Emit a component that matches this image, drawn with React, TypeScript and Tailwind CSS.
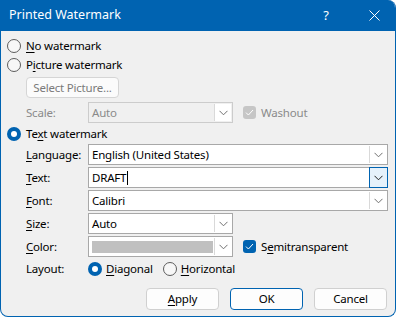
import React from "react";

const font = { fontFamily: '"Segoe UI", "Noto Sans", sans-serif' };

const U = ({ children }: { children: React.ReactNode }) => (
  <span className="underline underline-offset-2 decoration-1">{children}</span>
);

const Chevron = ({ color = "#606060" }: { color?: string }) => (
  <svg width="9" height="6" viewBox="0 0 9 6">
    <path d="M0.5 0.8 L4.5 4.8 L8.5 0.8" fill="none" stroke={color} strokeWidth="1" />
  </svg>
);

const Radio = ({ checked = false }: { checked?: boolean }) =>
  checked ? (
    <span className="w-[14px] h-[14px] rounded-full bg-[#0063b1] flex items-center justify-center shrink-0">
      <span className="w-[6px] h-[6px] rounded-full bg-white" />
    </span>
  ) : (
    <span className="w-[14px] h-[14px] rounded-full border border-[#5c5c5c] bg-[#f7f7f7] shrink-0" />
  );

const Check = ({ disabled = false }: { disabled?: boolean }) => (
  <span
    className={`w-[13px] h-[13px] rounded-[3px] flex items-center justify-center shrink-0 ${
      disabled ? "bg-[#c6c6c6]" : "bg-[#0063b1]"
    }`}
  >
    <svg width="9" height="7" viewBox="0 0 9 7">
      <path d="M1 3.6 L3.4 6 L8 1" fill="none" stroke="white" strokeWidth="1" />
    </svg>
  </span>
);

const Combo = ({
  width,
  text,
  disabled = false,
  focused = false,
  children,
}: {
  width: string;
  text?: string;
  disabled?: boolean;
  focused?: boolean;
  children?: React.ReactNode;
}) => (
  <div
    className={`${width} h-[21px] flex border ${
      disabled ? "border-[#cccccc] bg-[#f0f0f0] text-[#8a8a8a]" : "border-[#a8a8a8] bg-white text-black"
    }`}
  >
    <div className="flex-1 flex items-center pl-[3px] leading-none">{children ?? text}</div>
    <div
      className={`w-[17px] flex items-center justify-center ${
        focused
          ? "border border-[#0063b1] bg-[#e5f1fb] -my-px -mr-px w-[19px]"
          : "border-l border-[#d9d9d9] bg-white m-px"
      }`}
    >
      <Chevron color={focused ? "#1e1e1e" : "#707070"} />
    </div>
  </div>
);

const Label = ({ children, muted = false }: { children: React.ReactNode; muted?: boolean }) => (
  <div className={`w-[62px] ${muted ? "text-[#8a8a8a]" : "text-black"}`}>{children}</div>
);

const Button = ({ children, primary = false }: { children: React.ReactNode; primary?: boolean }) => (
  <button
    className={`w-[73px] h-[22px] rounded-[4px] bg-[#fdfdfd] text-black flex items-center justify-center border ${
      primary ? "border-[#0063b1]" : "border-[#d0d0d0]"
    }`}
  >
    {children}
  </button>
);

export default function App() {
  return (
    <div className="w-[396px] h-[317px] bg-white text-[11.5px] tracking-[-0.2px] text-black" style={font}>
      <div className="w-full h-full flex flex-col rounded-b-[8px] rounded-tr-[8px] overflow-hidden border border-t-0 border-[#0063b1] bg-[#f0f0f0]">
        <div className="h-[31px] bg-[#0063b1] text-white flex items-center shrink-0 -mx-px tracking-normal">
          <div className="pl-[9px] flex-1 text-[12.5px]">Printed Watermark</div>
          <div className="w-[20px] text-center text-[13px] mr-[33px]">?</div>
          <svg width="11" height="11" viewBox="0 0 11 11" className="mr-[16px]">
            <path d="M0.5 0.5 L10.5 10.5 M10.5 0.5 L0.5 10.5" stroke="white" strokeWidth="1" />
          </svg>
        </div>

        <div className="flex flex-col pl-[6px] pt-[5px]">
          <div className="h-[19px] flex items-center gap-[5px]">
            <Radio />
            <span><U>N</U>o watermark</span>
          </div>
          <div className="h-[19px] flex items-center gap-[5px]">
            <Radio />
            <span>P<U>i</U>cture watermark</span>
          </div>
          <div className="pl-[19px] mt-[3px]">
            <div className="w-[93px] h-[21px] rounded-[4px] border border-[#d5d5d5] bg-[#fbfbfb] text-[#7a7a7a] flex items-center justify-center">
              Select Picture...
            </div>
          </div>
          <div className="pl-[19px] mt-[4px] h-[21px] flex items-center">
            <Label muted>Scale:</Label>
            <Combo width="w-[145px]" text="Auto" disabled />
            <div className="ml-[10px] flex items-center gap-[5px] text-[#8a8a8a]">
              <Check disabled />
              <span>Washout</span>
            </div>
          </div>
          <div className="h-[19px] mt-px flex items-center gap-[5px]">
            <Radio checked />
            <span>Te<U>x</U>t watermark</span>
          </div>
          <div className="pl-[19px] flex flex-col gap-[2px] mt-px">
            <div className="flex items-center">
              <Label><U>L</U>anguage:</Label>
              <Combo width="w-[300px]" text="English (United States)" />
            </div>
            <div className="flex items-center">
              <Label><U>T</U>ext:</Label>
              <Combo width="w-[300px]" focused>
                <span>DRAFT</span>
                <span className="w-px h-[14px] bg-black ml-px" />
              </Combo>
            </div>
            <div className="flex items-center">
              <Label><U>F</U>ont:</Label>
              <Combo width="w-[300px]" text="Calibri" />
            </div>
            <div className="flex items-center">
              <Label><U>S</U>ize:</Label>
              <Combo width="w-[145px]" text="Auto" />
            </div>
            <div className="flex items-center">
              <Label><U>C</U>olor:</Label>
              <Combo width="w-[145px]">
                <span className="block w-[121px] h-[12px] bg-[#c0c0c0]" />
              </Combo>
              <div className="ml-[10px] flex items-center gap-[5px]">
                <Check />
                <span>S<U>e</U>mitransparent</span>
              </div>
            </div>
            <div className="flex items-center h-[20px]">
              <Label>Layout:</Label>
              <div className="flex items-center gap-[4px]">
                <Radio checked />
                <span><U>D</U>iagonal</span>
              </div>
              <div className="flex items-center gap-[4px] ml-[10px]">
                <Radio />
                <span><U>H</U>orizontal</span>
              </div>
            </div>
          </div>
          <div className="flex justify-end gap-[11px] pr-[8px] mt-[9px]">
            <Button><U>A</U>pply</Button>
            <Button primary>OK</Button>
            <Button>Cancel</Button>
          </div>
        </div>
      </div>
    </div>
  );
}
